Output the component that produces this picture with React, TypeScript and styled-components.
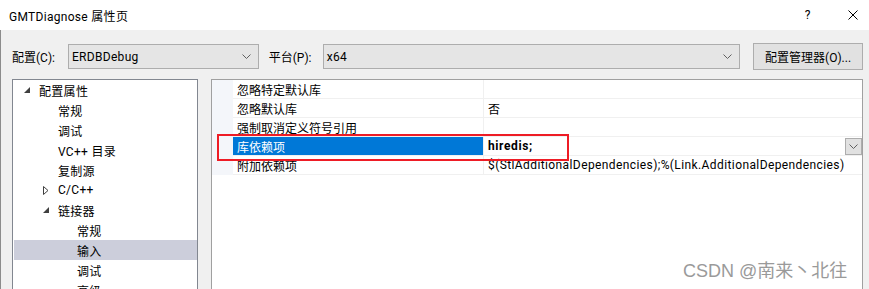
import styled, { createGlobalStyle } from 'styled-components'

const GlobalStyle = createGlobalStyle`
    html, body {
        margin: 0;
        padding: 0;
        background: #f0f0f0;
    }
    body {
        font-family: Roboto, "Noto Sans CJK SC", sans-serif;
        font-size: 12px;
        color: #000;
    }
`

const Window = styled.div`
    position: relative;
    width: 869px;
    height: 289px;
    overflow: hidden;
    background: #f0f0f0;
    display: flex;
    flex-direction: column;
`

const TitleBar = styled.div`
    height: 30px;
    flex: none;
    background: #fff;
    display: flex;
    align-items: center;
    padding-left: 9px;
`

const Title = styled.div`
    flex: 1;
    font-size: 12px;
    letter-spacing: 0.3px;
`

const CaptionButton = styled.div`
    width: 45px;
    height: 30px;
    display: flex;
    align-items: center;
    justify-content: center;
    font-size: 12px;
    &:last-child {
        margin-right: -6px;
    }
`

const Body = styled.div`
    flex: 1;
    min-height: 0;
    border-left: 1px solid #8c8c8c;
    padding: 13px 6px 0 11px;
    display: flex;
    flex-direction: column;
    gap: 9px;
`

const ConfigRow = styled.div`
    height: 27px;
    display: flex;
    align-items: center;
`

const FieldLabel = styled.label<{ $width: number }>`
    width: ${p => p.$width}px;
    flex: none;
`

const Combo = styled.div<{ $width: number }>`
    box-sizing: border-box;
    width: ${p => p.$width}px;
    height: 25px;
    background: #e5e5e5;
    border: 1px solid #adadad;
    display: flex;
    align-items: center;
    padding: 0 7px 0 3px;
    margin-right: ${p => (p.$width > 300 ? 13 : 10)}px;
    letter-spacing: 0.3px;
    span {
        flex: 1;
    }
`

const Button = styled.button`
    box-sizing: border-box;
    width: 110px;
    height: 27px;
    background: #e1e1e1;
    border: 1px solid #adadad;
    font: inherit;
    color: #000;
    padding: 0;
`

const Content = styled.div`
    flex: 1;
    min-height: 0;
    display: flex;
    gap: 13px;
`

const Tree = styled.div`
    box-sizing: border-box;
    width: 186px;
    height: 240px;
    flex: none;
    background: #fff;
    border: 1px solid #828790;
`

const TreeItem = styled.div<{ $level: number; $selected?: boolean }>`
    height: 20px;
    display: flex;
    align-items: center;
    padding-left: ${p => 5 + p.$level * 19}px;
    margin-left: 1px;
    letter-spacing: 0.3px;
    background: ${p => (p.$selected ? '#cccedb' : 'transparent')};
`

const Expander = styled.span`
    width: 20px;
    padding-right: 4px;
    box-sizing: border-box;
    display: flex;
    justify-content: center;
    align-items: center;
`

const Grid = styled.div`
    box-sizing: border-box;
    flex: 1;
    height: 240px;
    background: #fff;
    border: 1px solid #a0a0a0;
`

const PropRow = styled.div`
    display: grid;
    grid-template-columns: 21px 251px 1fr;
    height: 19px;
`

const Margin = styled.div`
    background: #f4f6fa;
`

const NameCell = styled.div<{ $selected?: boolean }>`
    box-sizing: border-box;
    display: flex;
    align-items: center;
    padding-left: 4px;
    border-bottom: 1px solid #f0f0f0;
    border-right: 1px solid #f0f0f0;
    background: ${p => (p.$selected ? '#0078d7' : 'transparent')};
    color: ${p => (p.$selected ? '#fff' : '#000')};
`

const ValueCell = styled.div<{ $bold?: boolean }>`
    box-sizing: border-box;
    display: flex;
    align-items: center;
    padding-left: 4px;
    border-bottom: 1px solid #f0f0f0;
    font-weight: ${p => (p.$bold ? 700 : 400)};
    letter-spacing: ${p => (p.$bold ? 0.6 : 0.4)}px;
    white-space: nowrap;
    span {
        flex: 1;
    }
`

const DropButton = styled.div`
    box-sizing: border-box;
    width: 17px;
    height: 17px;
    margin-top: 1px;
    background: #e1e1e1;
    border: 1px solid #adadad;
    display: flex;
    align-items: center;
    justify-content: center;
`

const Highlight = styled.div`
    position: absolute;
    left: 217px;
    top: 134px;
    width: 352px;
    height: 27px;
    box-sizing: border-box;
    border: 2px solid #ee1c25;
    pointer-events: none;
`

const Watermark = styled.div`
    position: absolute;
    left: 683px;
    top: 256px;
    font-family: "Liberation Sans", "Noto Sans CJK SC", sans-serif;
    font-size: 18px;
    color: #9a9a9a;
    text-shadow: 0 0 1px #fff;
    white-space: nowrap;
`

const Chevron = () => (
    <svg width="9" height="5" viewBox="0 0 9 5">
        <polyline points="0.5,0.5 4.5,4.5 8.5,0.5" fill="none" stroke="#606060" strokeWidth="1" />
    </svg>
)

const ExpandedArrow = () => (
    <svg width="6" height="6" viewBox="0 0 6 6">
        <polygon points="6,0 6,6 0,6" fill="#404040" />
    </svg>
)

const CollapsedArrow = () => (
    <svg width="6" height="9" viewBox="0 0 6 9">
        <polygon points="0.5,0.5 5,4.5 0.5,8.5" fill="none" stroke="#404040" strokeWidth="1" />
    </svg>
)

const CloseIcon = () => (
    <svg width="10" height="10" viewBox="0 0 10 10">
        <path d="M0.5 0.5 L9.5 9.5 M9.5 0.5 L0.5 9.5" stroke="#000" strokeWidth="1" />
    </svg>
)

interface TreeNode {
    label: string;
    level: number;
    arrow?: 'open' | 'closed';
    selected?: boolean;
}

const treeNodes: TreeNode[] = [
    { label: '配置属性', level: 0, arrow: 'open' },
    { label: '常规', level: 1 },
    { label: '调试', level: 1 },
    { label: 'VC++ 目录', level: 1 },
    { label: '复制源', level: 1 },
    { label: 'C/C++', level: 1, arrow: 'closed' },
    { label: '链接器', level: 1, arrow: 'open' },
    { label: '常规', level: 2 },
    { label: '输入', level: 2, selected: true },
    { label: '调试', level: 2 },
    { label: '高级', level: 2 },
]

interface PropItem {
    name: string;
    value: string;
    selected?: boolean;
}

const props: PropItem[] = [
    { name: '忽略特定默认库', value: '' },
    { name: '忽略默认库', value: '否' },
    { name: '强制取消定义符号引用', value: '' },
    { name: '库依赖项', value: 'hiredis;', selected: true },
    { name: '附加依赖项', value: '$(StlAdditionalDependencies);%(Link.AdditionalDependencies)' },
]

const App = () => {
    return (
        <Window>
            <GlobalStyle />
            <TitleBar>
                <Title>GMTDiagnose 属性页</Title>
                <CaptionButton>?</CaptionButton>
                <CaptionButton><CloseIcon /></CaptionButton>
            </TitleBar>
            <Body>
                <ConfigRow>
                    <FieldLabel $width={56}>配置(C):</FieldLabel>
                    <Combo $width={191}>
                        <span>ERDBDebug</span>
                        <Chevron />
                    </Combo>
                    <FieldLabel $width={54}>平台(P):</FieldLabel>
                    <Combo $width={418}>
                        <span>x64</span>
                        <Chevron />
                    </Combo>
                    <Button>配置管理器(O)...</Button>
                </ConfigRow>
                <Content>
                    <Tree>
                        {treeNodes.map((n, i) => (
                            <TreeItem key={i} $level={n.level} $selected={n.selected}>
                                <Expander>
                                    {n.arrow === 'open' && <ExpandedArrow />}
                                    {n.arrow === 'closed' && <CollapsedArrow />}
                                </Expander>
                                {n.label}
                            </TreeItem>
                        ))}
                    </Tree>
                    <Grid>
                        {props.map((p, i) => (
                            <PropRow key={i}>
                                <Margin />
                                <NameCell $selected={p.selected}>{p.name}</NameCell>
                                <ValueCell $bold={p.selected}>
                                    <span>{p.value}</span>
                                    {p.selected && <DropButton><Chevron /></DropButton>}
                                </ValueCell>
                            </PropRow>
                        ))}
                    </Grid>
                </Content>
            </Body>
            <Highlight />
            <Watermark>CSDN @南来丶北往</Watermark>
        </Window>
    )
}

export default App
